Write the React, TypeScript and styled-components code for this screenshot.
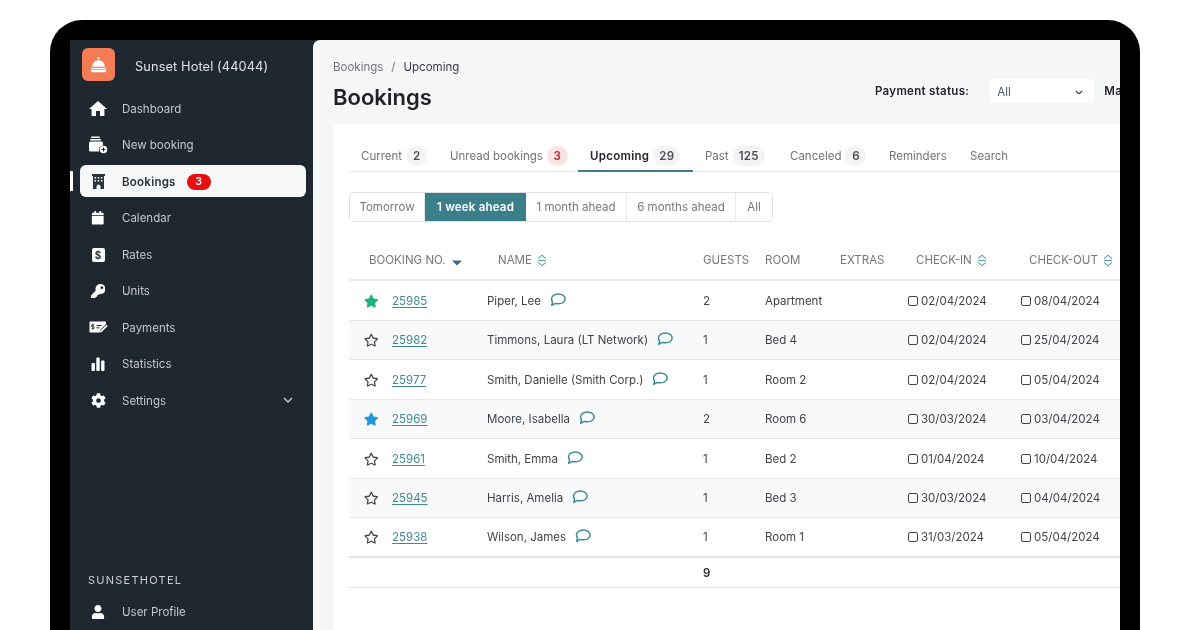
import React from "react";
import styled, { createGlobalStyle } from "styled-components";
import { FaCalendar, FaKey, FaCog, FaUser, FaStar, FaRegStar } from "react-icons/fa";

const Global = createGlobalStyle`
  html, body { margin: 0; padding: 0; background: #fff; }
  body { width: 1200px; height: 630px; overflow: hidden; font-family: Inter, "Noto Sans", sans-serif; }
  * { box-sizing: border-box; }
`;

const Frame = styled.div`
  width: 1090px;
  height: 610px;
  margin: 20px 0 0 50px;
  padding: 20px 20px 0;
  background: #000;
  border-radius: 32px 32px 0 0;
`;
const Screen = styled.div`
  display: flex;
  height: 590px;
  overflow: hidden;
  background: #1f2731;
  filter: blur(0.4px);
`;
const Sidebar = styled.aside`
  width: 243px;
  flex: none;
  display: flex;
  flex-direction: column;
  padding: 8px 7px 0 10px;
  color: #d5d9dd;
`;
const Brand = styled.div`
  display: flex;
  align-items: center;
  gap: 20px;
  padding-left: 2px;
  height: 33px;
  margin-bottom: 11px;
  font-size: 12.8px;
  letter-spacing: 0.1px;
  color: #dfe2e5;
`;
const BrandName = styled.span`
  padding-top: 3px;
`;
const Logo = styled.div`
  width: 33px;
  height: 33px;
  border-radius: 6px;
  background: #f47c55;
  display: flex;
  align-items: center;
  justify-content: center;
`;
const Nav = styled.nav`
  display: flex;
  flex-direction: column;
  gap: 4.5px;
`;
const Item = styled.div<{ $active?: boolean }>`
  position: relative;
  height: 32px;
  display: flex;
  align-items: center;
  padding: 1px 0 0 7px;
  border-radius: 6px;
  font-size: 11.5px;
  font-weight: ${(p) => (p.$active ? 600 : 400)};
  letter-spacing: ${(p) => (p.$active ? "0.25px" : "0")};
  background: ${(p) => (p.$active ? "#f5f7f8" : "transparent")};
  color: ${(p) => (p.$active ? "#2a323a" : "#c4c9ce")};
`;
const ActiveMark = styled.span`
  position: absolute;
  left: -10px;
  top: 6px;
  width: 3px;
  height: 20px;
  background: #fff;
`;
const IconBox = styled.span<{ $dark?: boolean }>`
  width: 22px;
  margin-right: 13px;
  display: flex;
  justify-content: center;
  align-items: center;
  font-size: 15px;
  color: ${(p) => (p.$dark ? "#2a323a" : "#fff")};
`;
const NavBadge = styled.span`
  margin-left: 11px;
  width: 24px;
  height: 16px;
  border-radius: 8px;
  background: #e70f10;
  color: #fff;
  font-size: 10.5px;
  font-weight: 600;
  display: flex;
  align-items: center;
  justify-content: center;
`;
const Caret = styled.span`
  margin: -2px 13px 0 auto;
  display: flex;
`;
const Footer = styled.div`
  margin-top: auto;
  height: 56px;
`;
const FooterTitle = styled.div`
  font-size: 11px;
  line-height: 13px;
  letter-spacing: 1.25px;
  padding-left: 8px;
  margin-bottom: 8px;
  color: #c9ced3;
`;

const Main = styled.main`
  flex: 1;
  min-width: 0;
  background: #f5f7f7;
  border-radius: 7px 0 0 0;
  padding: 20px 0 0 20px;
  overflow: hidden;
`;
const Crumbs = styled.div`
  display: flex;
  gap: 8px;
  font-size: 11.5px;
  line-height: 14px;
  color: #6f7478;
`;
const CrumbNow = styled.span`
  color: #3a3f44;
`;
const HeadRow = styled.div`
  display: flex;
  align-items: center;
  height: 34px;
  margin-top: 6px;
  width: 900px;
`;
const Title = styled.h1`
  margin: 0;
  font-size: 22px;
  font-weight: 600;
  color: #1e2226;
  width: 542px;
`;
const Filters = styled.div`
  display: flex;
  align-items: center;
  margin-bottom: 12px;
`;
const FilterLabel = styled.span`
  font-size: 11.5px;
  font-weight: 600;
  letter-spacing: 0.3px;
  color: #22262a;
  white-space: nowrap;
`;
const Select = styled.div`
  width: 104px;
  height: 24px;
  margin: 0 10px 0 21px;
  padding: 2px 11px 0 7px;
  background: #fff;
  border-radius: 3px;
  display: flex;
  align-items: center;
  justify-content: space-between;
  font-size: 11.5px;
  color: #555a5f;
`;
const Card = styled.section`
  margin-top: 10px;
  width: 900px;
  height: 520px;
  background: #fff;
  border-radius: 6px 0 0 0;
  padding: 22px 0 0 16px;
`;
const Tabs = styled.div`
  display: flex;
  height: 26px;
  border-bottom: 1px solid #e6e8e9;
`;
const Tab = styled.div<{ $active?: boolean; $w: number }>`
  width: ${(p) => p.$w}px;
  flex: none;
  height: 26px;
  display: flex;
  align-items: flex-start;
  padding-left: 12px;
  font-size: 11.5px;
  line-height: 21px;
  font-weight: ${(p) => (p.$active ? 600 : 400)};
  letter-spacing: ${(p) => (p.$active ? "0.3px" : "0")};
  color: ${(p) => (p.$active ? "#22262a" : "#6f7478")};
  border-bottom: ${(p) => (p.$active ? "2px solid #3a8089" : "none")};
`;
const Count = styled.span<{ $red?: boolean; $wide?: boolean }>`
  margin-left: 4px;
  min-width: 21px;
  height: 20px;
  padding: 0 ${(p) => (p.$wide ? 6 : 4)}px;
  border-radius: 10px;
  background: ${(p) => (p.$red ? "#fbe3e4" : "#f3f3f3")};
  color: ${(p) => (p.$red ? "#b52029" : "#4a4f54")};
  font-size: 11.5px;
  font-weight: 600;
  letter-spacing: 0.3px;
  display: inline-flex;
  align-items: center;
  justify-content: center;
`;
const Segments = styled.div`
  display: inline-flex;
  margin-top: 20px;
  height: 30px;
  border: 1px solid #dfe1e3;
  border-radius: 4px;
  overflow: hidden;
`;
const Segment = styled.div<{ $active?: boolean; $w: number }>`
  width: ${(p) => p.$w}px;
  display: flex;
  align-items: center;
  justify-content: center;
  font-size: 11.5px;
  font-weight: ${(p) => (p.$active ? 600 : 400)};
  letter-spacing: ${(p) => (p.$active ? "0.2px" : "0")};
  color: ${(p) => (p.$active ? "#fff" : "#73787c")};
  background: ${(p) => (p.$active ? "#3a7f8a" : "#fff")};
  border-right: ${(p) => (p.$active ? "none" : "1px solid #e6e8e9")};
  &:last-child { border-right: none; }
`;
const Table = styled.div`
  margin-top: 18px;
  font-size: 11.5px;
  color: #3f4449;
`;
const HeaderRow = styled.div`
  display: grid;
  grid-template-columns: 129px 205px 62px 75px 76px 113px 110px;
  height: 41px;
  padding: 1px 0 0 20px;
  align-items: center;
  border-bottom: 2px solid #e8e9ea;
  font-size: 11.5px;
  color: #73787c;
  white-space: nowrap;
`;
const HeaderCell = styled.div`
  display: flex;
  align-items: center;
  gap: 5px;
`;
const Row = styled.div<{ $shade?: boolean; $last?: boolean }>`
  display: grid;
  grid-template-columns: 43px 95px 216px 62px 75px 68px 113px 110px;
  height: 39.5px;
  padding-top: 1px;
  align-items: center;
  border-bottom: ${(p) => (p.$last ? "2px solid #e2e3e4" : "1px solid #e8e9ea")};
  background: ${(p) => (p.$shade ? "#f9f9f9" : "#fff")};
  white-space: nowrap;
`;
const StarCell = styled.div<{ $color?: string }>`
  display: flex;
  justify-content: center;
  padding-left: 2px;
  font-size: 14.5px;
  color: ${(p) => p.$color ?? "#3c4146"};
`;
const BookingLink = styled.a`
  color: #3f8b92;
  text-decoration: underline;
  text-underline-offset: 2px;
`;
const NameCell = styled.div`
  display: flex;
  align-items: center;
  gap: 9px;
`;
const BubbleWrap = styled.span`
  display: flex;
  margin-top: -2px;
`;
const DateCell = styled.div`
  display: flex;
  align-items: center;
  gap: 3px;
`;
const Check = styled.span`
  width: 10px;
  height: 10px;
  border: 1.2px solid #40454a;
  border-radius: 2px;
`;
const TotalRow = styled.div`
  display: grid;
  grid-template-columns: 354px 62px;
  height: 30px;
  padding-top: 1px;
  align-items: center;
  border-bottom: 1px solid #e2e3e4;
  font-weight: 600;
  color: #2a2e32;
`;
const SortMark = styled.span`
  display: flex;
  margin: 4px 0 0 1px;
`;

const Bell = () => (
  <svg width="19" height="17" viewBox="0 0 22 20" fill="#fff">
    <circle cx="11" cy="2.6" r="1.3" />
    <path d="M3.6 12.5C3.8 8 7 5 11 5s7.200 3 7.400 7.500z" />
    <rect x="2" y="14" width="18" height="1.6" />
    <path d="M1.500 16.600h19l-1.500 2.400H3z" />
  </svg>
);
const Chevron = ({ w, color }: { w: number; color: string }) => (
  <svg width={w} height={w * 0.6} viewBox="0 0 10 6" fill="none" stroke={color} strokeWidth="1.400">
    <path d="M1 1l4 4 4-4" />
  </svg>
);
const HomeIcon = () => (
  <svg width="18" height="15" viewBox="0 0 18 15" fill="#fff">
    <path d="M9 0L0 8h2.600v7h4.400v-5h4v5h4.400V8H18z" />
  </svg>
);
const NewBookingIcon = () => (
  <svg width="20" height="18" viewBox="0 0 20 18" fill="#fff">
    <rect x="3" y="0.500" width="9" height="1.500" rx="0.700" />
    <rect x="2" y="3" width="11" height="1.500" rx="0.700" />
    <path d="M1 7a1.500 1.500 0 0 1 1.500-1.500h11A1.500 1.500 0 0 1 15 7v2.200a5 5 0 0 0-4 6.300H2.500A1.500 1.500 0 0 1 1 14z" />
    <circle cx="15.500" cy="13.500" r="3.800" />
    <path d="M15.500 11.600v3.800M13.600 13.500h3.800" stroke="#1f2731" strokeWidth="1.100" />
  </svg>
);
const HotelIcon = () => (
  <svg width="15" height="15" viewBox="0 0 15 15" fill="#2a323a">
    <path d="M1 0h13v2h-1v13H9.500v-2.500a2 2 0 0 0-4 0V15H2V2H1z" />
    <g fill="#f5f7f8">
      <rect x="3.500" y="3" width="1.600" height="1.600" />
      <rect x="6.700" y="3" width="1.600" height="1.600" />
      <rect x="9.900" y="3" width="1.600" height="1.600" />
      <rect x="3.500" y="6" width="1.600" height="1.600" />
      <rect x="6.700" y="6" width="1.600" height="1.600" />
      <rect x="9.900" y="6" width="1.600" height="1.600" />
    </g>
  </svg>
);
const RatesMark = styled.span`
  width: 13px;
  height: 14px;
  border-radius: 2px;
  background: #fff;
  color: #1f2731;
  font-size: 10px;
  font-weight: 700;
  line-height: 14px;
  text-align: center;
`;
const PaymentsIcon = () => (
  <svg width="19" height="13" viewBox="0 0 19 13" fill="#fff">
    <path d="M1.500 0.500h14.500a1 1 0 0 1 1 1V3l-5.500 5.500-.8 3H1.500a1 1 0 0 1-1-1v-9a1 1 0 0 1 1-1z" />
    <path d="M5.200 3.800H3.400a.9.900 0 0 0 0 1.900h1a.9.900 0 0 1 0 1.900H2.600M3.900 2.800v5.800" fill="none" stroke="#1f2731" strokeWidth="0.900" />
    <path d="M7.500 4.500h5M7.500 6.800h3" stroke="#1f2731" strokeWidth="1" />
    <path d="M17.400 3.800l1.300 1.300-6 6-1.800.5.500-1.800z" />
  </svg>
);
const StatsIcon = () => (
  <svg width="14" height="14" viewBox="0 0 14 14" fill="#fff">
    <rect x="0.500" y="6" width="3.400" height="8" rx="1" />
    <rect x="5.300" y="0.500" width="3.400" height="13.500" rx="1" />
    <rect x="10.100" y="3.500" width="3.400" height="10.500" rx="1" />
  </svg>
);
const Bubble = () => (
  <svg width="16" height="14" viewBox="0 0 15 13" fill="none" stroke="#3a8a92" strokeWidth="1.400" strokeLinejoin="round">
    <path d="M7.800 0.800c3.400 0 6.400 1.900 6.400 4.700s-3 4.600-6.400 4.600c-1 0-2-.1-2.800-.5l-3.400 1.900.8-3C1.900 7.600 1.400 6.600 1.400 5.500c0-2.800 3-4.700 6.400-4.700z" />
  </svg>
);
const SortBoth = () => (
  <svg width="10" height="13" viewBox="0 0 10 13" fill="none" stroke="#5c9aa1" strokeWidth="1.100">
    <path d="M1.200 4.600L5 1.200l3.800 3.400M1.200 8.400L5 11.800l3.800-3.400M0.800 6.500h8.400" />
  </svg>
);
const SortDesc = () => (
  <svg width="10" height="7" viewBox="0 0 10 7" fill="#2f6f80">
    <path d="M0 1.500h10L5 6.500z" />
  </svg>
);

const nav = [
  { label: "Dashboard", icon: <HomeIcon /> },
  { label: "New booking", icon: <NewBookingIcon /> },
  { label: "Bookings", icon: <HotelIcon />, active: true, badge: "3" },
  { label: "Calendar", icon: <FaCalendar size={13.5} /> },
  { label: "Rates", icon: <RatesMark>$</RatesMark> },
  { label: "Units", icon: <FaKey size={14.500} /> },
  { label: "Payments", icon: <PaymentsIcon /> },
  { label: "Statistics", icon: <StatsIcon /> },
  { label: "Settings", icon: <FaCog size={15} />, caret: true },
];

const tabs = [
  { label: "Current", count: "2", w: 89 },
  { label: "Unread bookings", count: "3", red: true, w: 140 },
  { label: "Upcoming", count: "29", active: true, w: 115 },
  { label: "Past", count: "125", w: 85 },
  { label: "Canceled", count: "6", w: 99 },
  { label: "Reminders", w: 81 },
  { label: "Search", w: 60 },
];

const segs = [
  { label: "Tomorrow", w: 75 },
  { label: "1 week ahead", w: 101, active: true },
  { label: "1 month ahead", w: 101 },
  { label: "6 months ahead", w: 109 },
  { label: "All", w: 36 },
];

const rows = [
  { no: "25985", name: "Piper, Lee", g: "2", room: "Apartment", inn: "02/04/2024", out: "08/04/2024", star: "#1fb384" },
  { no: "25982", name: "Timmons, Laura (LT Network)", g: "1", room: "Bed 4", inn: "02/04/2024", out: "25/04/2024" },
  { no: "25977", name: "Smith, Danielle (Smith Corp.)", g: "1", room: "Room 2", inn: "02/04/2024", out: "05/04/2024" },
  { no: "25969", name: "Moore, Isabella", g: "2", room: "Room 6", inn: "30/03/2024", out: "03/04/2024", star: "#1e96e0" },
  { no: "25961", name: "Smith, Emma", g: "1", room: "Bed 2", inn: "01/04/2024", out: "10/04/2024" },
  { no: "25945", name: "Harris, Amelia", g: "1", room: "Bed 3", inn: "30/03/2024", out: "04/04/2024" },
  { no: "25938", name: "Wilson, James", g: "1", room: "Room 1", inn: "31/03/2024", out: "05/04/2024" },
];

export default function App() {
  return (
    <>
      <Global />
      <Frame>
        <Screen>
          <Sidebar>
            <Brand>
              <Logo><Bell /></Logo>
              <BrandName>Sunset Hotel (44044)</BrandName>
            </Brand>
            <Nav>
              {nav.map((n) => (
                <Item key={n.label} $active={n.active}>
                  {n.active && <ActiveMark />}
                  <IconBox $dark={n.active}>{n.icon}</IconBox>
                  {n.label}
                  {n.badge && <NavBadge>{n.badge}</NavBadge>}
                  {n.caret && <Caret><Chevron w={10} color="#c9ced3" /></Caret>}
                </Item>
              ))}
            </Nav>
            <Footer>
              <FooterTitle>SUNSETHOTEL</FooterTitle>
              <Item>
                <IconBox><FaUser size={14} /></IconBox>
                User Profile
              </Item>
            </Footer>
          </Sidebar>
          <Main>
            <Crumbs>
              <span>Bookings</span>
              <span>/</span>
              <CrumbNow>Upcoming</CrumbNow>
            </Crumbs>
            <HeadRow>
              <Title>Bookings</Title>
              <Filters>
                <FilterLabel>Payment status:</FilterLabel>
                <Select>All <Chevron w={8} color="#333" /></Select>
                <FilterLabel>Match</FilterLabel>
              </Filters>
            </HeadRow>
            <Card>
              <Tabs>
                {tabs.map((t) => (
                  <Tab key={t.label} $active={t.active} $w={t.w}>
                    {t.label}
                    {t.count && <Count $red={t.red} $wide={t.count.length > 1}>{t.count}</Count>}
                  </Tab>
                ))}
              </Tabs>
              <Segments>
                {segs.map((s) => (
                  <Segment key={s.label} $active={s.active} $w={s.w}>{s.label}</Segment>
                ))}
              </Segments>
              <Table>
                <HeaderRow>
                  <HeaderCell>BOOKING NO. <SortMark><SortDesc /></SortMark></HeaderCell>
                  <HeaderCell>NAME <SortBoth /></HeaderCell>
                  <HeaderCell>GUESTS</HeaderCell>
                  <HeaderCell>ROOM</HeaderCell>
                  <HeaderCell>EXTRAS</HeaderCell>
                  <HeaderCell>CHECK-IN <SortBoth /></HeaderCell>
                  <HeaderCell>CHECK-OUT <SortBoth /></HeaderCell>
                </HeaderRow>
                {rows.map((r, i) => (
                  <Row key={r.no} $shade={i % 2 === 1} $last={i === rows.length - 1}>
                    <StarCell $color={r.star}>{r.star ? <FaStar /> : <FaRegStar />}</StarCell>
                    <BookingLink>{r.no}</BookingLink>
                    <NameCell>{r.name} <BubbleWrap><Bubble /></BubbleWrap></NameCell>
                    <div>{r.g}</div>
                    <div>{r.room}</div>
                    <div />
                    <DateCell><Check />{r.inn}</DateCell>
                    <DateCell><Check />{r.out}</DateCell>
                  </Row>
                ))}
                <TotalRow>
                  <div />
                  <div>9</div>
                </TotalRow>
              </Table>
            </Card>
          </Main>
        </Screen>
      </Frame>
    </>
  );
}
